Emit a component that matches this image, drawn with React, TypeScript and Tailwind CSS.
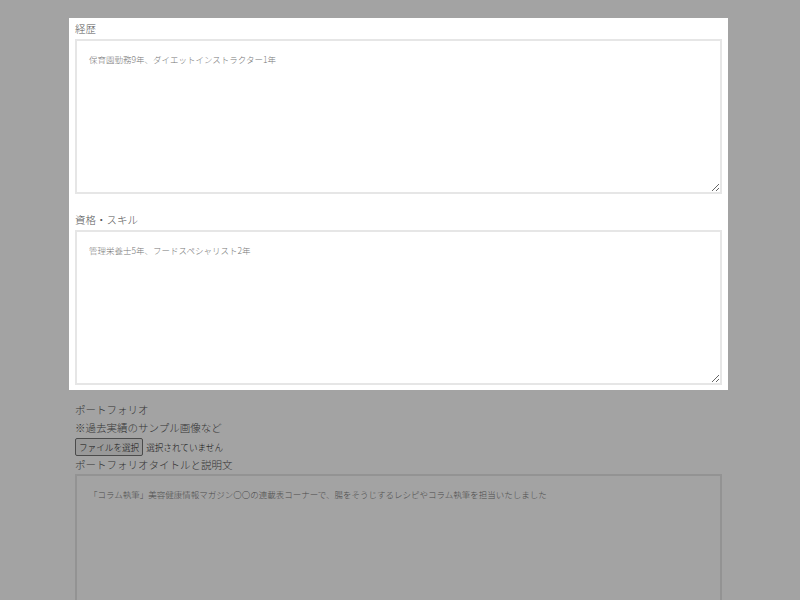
import React from "react";

const FONT = { fontFamily: '"Noto Sans CJK JP", "Noto Sans", sans-serif' };

function Field({
  label,
  value,
  className = "",
}: {
  label: string;
  value: string;
  className?: string;
}) {
  return (
    <div className={className}>
      <label className="mb-px block text-[10.5px] font-light leading-[18px] text-[#555]">{label}</label>
      <textarea
        defaultValue={value}
        className="block h-[155px] w-full border-2 border-[#e6e6e6] bg-white px-[12px] py-[12px] text-[8.5px] font-light leading-[13px] text-[#777] outline-none"
      />
    </div>
  );
}

export default function App() {
  return (
    <div className="min-h-screen bg-white" style={FONT}>
      {/* spotlight overlay */}
      <div className="fixed inset-0 z-10 bg-black/[0.36]" />

      <div className="ml-[69px] w-[659px] pt-[18px]">
        {/* highlighted section */}
        <section className="relative z-20 bg-white px-[6px] pb-[5px] pt-[2px]">
          <Field label="経歴" value="保育園勤務9年、ダイエットインストラクター1年" />
          <Field
            className="mt-[17px]"
            label="資格・スキル"
            value="管理栄養士5年、フードスペシャリスト2年"
          />
        </section>

        {/* rest of the form */}
        <div className="mt-[11px] px-[6px] text-[10.5px] font-light leading-[18px] text-[#555]">
          <p>ポートフォリオ</p>
          <p>※過去実績のサンプル画像など</p>
          <div className="mt-px flex h-[18px] items-center gap-[3px]">
            <button className="h-[18px] rounded-[2px] border border-[#767676] bg-[#efefef] px-[3px] text-[8.6px] leading-[16px] text-[#222]">
              ファイルを選択
            </button>
            <span className="text-[8.6px] text-[#222]">選択されていません</span>
          </div>
          <p>ポートフォリオタイトルと説明文</p>
          <textarea
            defaultValue="「コラム執筆」美容健康情報マガジン〇〇の連載表コーナーで、腸をそうじするレシピやコラム執筆を担当いたしました"
            className="block h-[155px] w-full border-2 border-[#e6e6e6] bg-white px-[12px] py-[12px] text-[8.5px] font-light leading-[13px] text-[#777] outline-none"
          />
        </div>
      </div>
    </div>
  );
}
